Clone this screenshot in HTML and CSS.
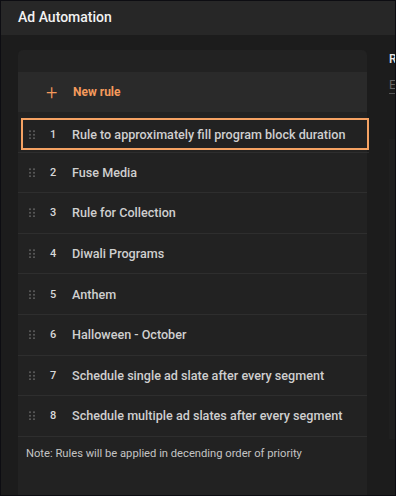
FILE: index.html
```html
<!DOCTYPE html>
<html lang="en">
<head>
  <meta charset="UTF-8">
  <title>Ad Automation</title>
  <link rel="stylesheet" href="styles.css">
</head>
<body>
  <div class="frame">
    <div class="topbar">Ad Automation</div>

    <div class="main">
      <div class="rules-panel">
        <div class="new-rule">
          <span class="plus">+</span>
          <span>New rule</span>
        </div>

        <div class="rule selected">
          <span class="handle"></span>
          <span class="num">1</span>
          <span class="name">Rule to approximately fill program block duration</span>
        </div>
        <div class="rule">
          <span class="handle"></span>
          <span class="num">2</span>
          <span class="name">Fuse Media</span>
        </div>
        <div class="rule">
          <span class="handle"></span>
          <span class="num">3</span>
          <span class="name">Rule for Collection</span>
        </div>
        <div class="rule">
          <span class="handle"></span>
          <span class="num">4</span>
          <span class="name">Diwali Programs</span>
        </div>
        <div class="rule">
          <span class="handle"></span>
          <span class="num">5</span>
          <span class="name">Anthem</span>
        </div>
        <div class="rule">
          <span class="handle"></span>
          <span class="num">6</span>
          <span class="name">Halloween - October</span>
        </div>
        <div class="rule">
          <span class="handle"></span>
          <span class="num">7</span>
          <span class="name">Schedule single ad slate after every segment</span>
        </div>
        <div class="rule">
          <span class="handle"></span>
          <span class="num">8</span>
          <span class="name">Schedule multiple ad slates after every segment</span>
        </div>

        <div class="note">Note: Rules will be applied in decending order of priority</div>
      </div>

      <div class="detail">
        <div class="detail-label">Rule name</div>
        <div class="detail-input">Enter name</div>
        <div class="detail-card"></div>
      </div>
    </div>
  </div>
</body>
</html>
```

FILE: styles.css
```css
body {
  margin: 0;
  background: #1c1c1c;
  font-family: Roboto, "Liberation Sans", sans-serif;
}
.frame {
  width: 396px;
  height: 496px;
  box-sizing: border-box;
  border: 1px solid #0d0d12;
  background: #1c1c1c;
  overflow: hidden;
}
.topbar {
  height: 34px;
  line-height: 32px;
  padding-left: 17px;
  background: #272727;
  color: #f2f2f2;
  font-size: 14px;
  font-weight: 500;
}
.main {
  display: flex;
  padding: 15px 0 0 17px;
  height: 446px;
}
.rules-panel {
  width: 349px;
  flex-shrink: 0;
  background: #222222;
  border-radius: 5px 5px 0 0;
  padding-top: 22px;
}
.new-rule {
  display: flex;
  align-items: center;
  height: 40px;
  background: #2a2a2a;
  color: #f59a5c;
  font-size: 12px;
  font-weight: 700;
}
.plus {
  width: 27px;
  margin-left: 28px;
  font-size: 20px;
  font-weight: 300;
}
.rule {
  display: flex;
  align-items: center;
  height: 40.6px;
  box-sizing: border-box;
  border-bottom: 1px solid #2e2e2e;
  color: #cfcfcf;
  font-size: 12.6px;
  font-weight: 500;
}
.rule.selected {
  height: 32px;
  margin: 6px -2px 2.6px 3px;
  border: 2px solid #f5a263;
  position: relative;
}
.rule.selected::after {
  content: "";
  position: absolute;
  left: -5px;
  right: -2px;
  bottom: -5px;
  border-bottom: 1px solid #2e2e2e;
}
.handle {
  width: 6px;
  height: 9px;
  margin-left: 11px;
  margin-right: 15px;
  background-image: radial-gradient(circle, #555 0.9px, transparent 1.2px);
  background-size: 4px 3.5px;
  background-position: -1px -0.5px;
}
.rule.selected .handle {
  margin-left: 6px;
}
.num {
  width: 22px;
  font-size: 11px;
  color: #d8d8d8;
}
.name {
  white-space: nowrap;
}
.note {
  padding: 10px 0 0 8px;
  color: #c4c4c4;
  font-size: 11.2px;
}
.detail {
  margin-left: 22px;
  padding-top: 2px;
  flex: 1;
  overflow: hidden;
  white-space: nowrap;
}
.detail-label {
  color: #e8e8e8;
  font-size: 12px;
  font-weight: 500;
}
.detail-input {
  margin-top: 12px;
  width: 60px;
  padding-bottom: 1px;
  border-bottom: 1px solid #555;
  color: #666;
  font-size: 12px;
}
.detail-card {
  margin-top: 45px;
  margin-left: -4px;
  height: 300px;
  background: #1f1f1f;
}
```
